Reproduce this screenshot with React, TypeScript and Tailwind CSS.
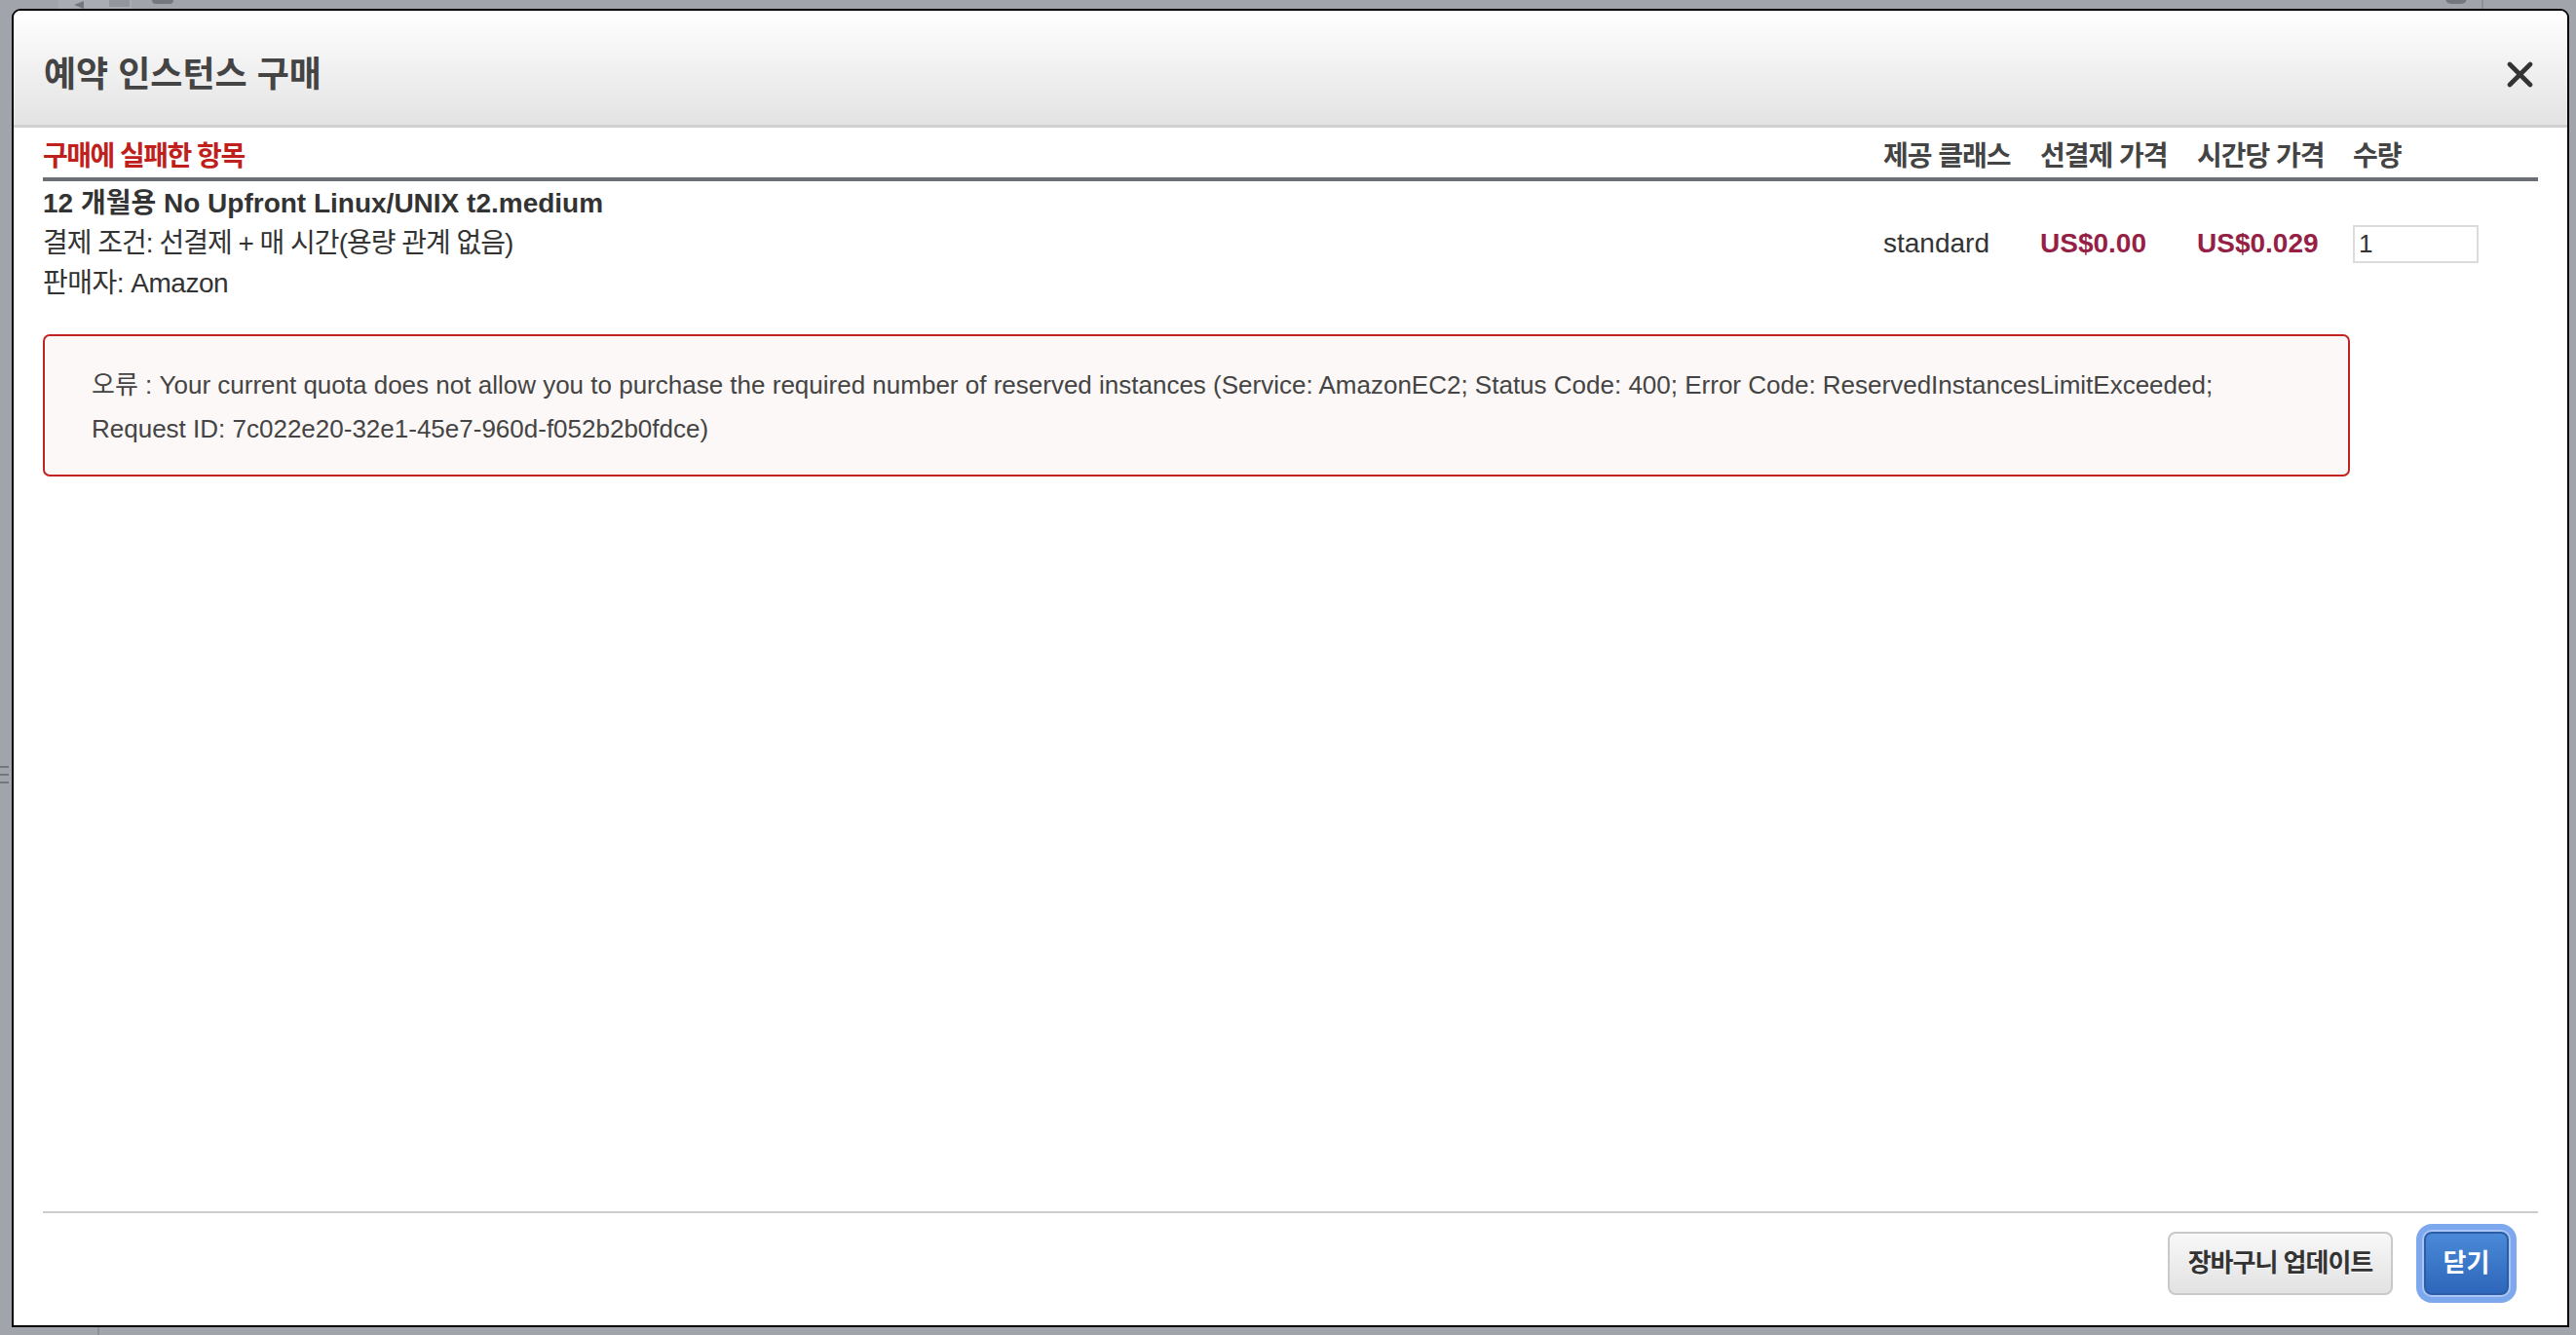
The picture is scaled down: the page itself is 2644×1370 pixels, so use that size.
export default function App() {
  const cols = "grid grid-cols-[1889px_161px_161px_160px_189px]";
  return (
    <div className="relative w-[2644px] h-[1370px] overflow-hidden bg-[#a1a4ab] font-['Liberation_Sans','Noto_Sans_CJK_KR',sans-serif]">
      {/* background page fragments peeking around the dialog */}
      <div className="absolute left-[60px] top-0 w-[75px] h-[10px] bg-[#a9acb3]" />
      <div className="absolute left-[76px] top-[1px] w-0 h-0 border-y-[4px] border-y-transparent border-r-[10px] border-r-[#74777d]" />
      <div className="absolute left-[112px] top-0 w-[21px] h-[7px] bg-[#93969c]" />
      <div className="absolute left-[156px] top-0 w-[22px] h-[4px] rounded-b-full bg-[#74777d]" />
      <div className="absolute left-[2510px] top-[-8px] w-[22px] h-[12px] rounded-full bg-[#74777d]" />
      <div className="absolute left-[2547px] top-0 w-[2px] h-[9px] bg-[#8d9096]" />
      <div className="absolute left-0 top-[786px] w-[9px] h-[2px] bg-[#73767c]" />
      <div className="absolute left-0 top-[794px] w-[9px] h-[2px] bg-[#73767c]" />
      <div className="absolute left-0 top-[802px] w-[9px] h-[2px] bg-[#73767c]" />
      <div className="absolute left-[100px] top-[1362px] w-[2px] h-[8px] bg-[#8d9096]" />

      {/* dialog */}
      <div className="absolute left-[12px] top-[9px] w-[2625px] h-[1353px] border-2 border-black rounded-t-[9px] bg-white flex flex-col overflow-hidden">
        {/* header */}
        <div className="h-[120px] shrink-0 border-b-[3px] border-[#d0d0d0] bg-linear-to-b from-[#ffffff] to-[#e3e3e3] flex items-center justify-between pl-[31px] pr-[35px] pt-[14px]">
          <h1 className="text-[36px] font-bold text-[#444444] leading-none">예약 인스턴스 구매</h1>
          <svg width="27" height="27" viewBox="0 0 27 27" className="shrink-0">
            <path d="M3 3 L24 24 M24 3 L3 24" stroke="#333333" strokeWidth="4.6" strokeLinecap="round" />
          </svg>
        </div>

        {/* body */}
        <div className="flex-1 px-[30px]">
          <div className={`${cols} h-[55px] border-b-4 border-[#6c6f75] text-[28px] font-bold leading-[34px] text-[#444444]`}>
            <div className="flex items-end pb-[4px] text-[#c0201b] tracking-[-1.5px]">구매에 실패한 항목</div>
            <div className="flex items-end pb-[4px] tracking-[-1px]">제공 클래스</div>
            <div className="flex items-end pb-[4px] tracking-[-1px]">선결제 가격</div>
            <div className="flex items-end pb-[4px] tracking-[-1px]">시간당 가격</div>
            <div className="flex items-end pb-[4px] tracking-[-1px]">수량</div>
          </div>

          <div className={`${cols} items-center pt-[2px] text-[28px] text-[#333333]`}>
            <div className="leading-[41px]">
              <div className="font-bold">12 개월용 No Upfront Linux/UNIX t2.medium</div>
              <div className="tracking-[-1px]">결제 조건: 선결제 + 매 시간(용량 관계 없음)</div>
              <div className="tracking-[-0.5px]">판매자: Amazon</div>
            </div>
            <div>standard</div>
            <div className="font-bold text-[#951f45]">US$0.00</div>
            <div className="font-bold text-[#951f45]">US$0.029</div>
            <div>
              <input
                defaultValue="1"
                className="w-[129px] h-[39px] border-2 border-[#dcdcdc] pl-[4px] text-[26px] text-[#333333] outline-none bg-white"
              />
            </div>
          </div>

          <div className="mt-[32px] w-[2368px] border-2 border-[#c2231e] rounded-[7px] bg-[#fcf8f7] pl-[48px] pr-[48px] pt-[28px] pb-[24px] text-[26px] leading-[45px] text-[#444444]">
            오류 : Your current quota does not allow you to purchase the required number of reserved instances (Service: AmazonEC2; Status Code: 400; Error Code: ReservedInstancesLimitExceeded; Request ID: 7c022e20-32e1-45e7-960d-f052b2b0fdce)
          </div>
        </div>

        {/* footer */}
        <div className="shrink-0 mx-[30px] border-t-2 border-[#cccccc] pt-[19px] pb-[31px] pr-[30px] flex justify-end items-center gap-[32px]">
          <button className="w-[231px] h-[65px] rounded-[8px] border-2 border-[#c9c9c9] bg-linear-to-b from-[#f8f8f8] to-[#e2e2e2] text-[26px] font-bold text-[#333333] tracking-[-1px] [text-shadow:0_1px_0_#ffffff]">
            장바구니 업데이트
          </button>
          <button className="w-[87px] h-[65px] rounded-[8px] border-2 border-[#2a5da6] bg-linear-to-b from-[#4b8ad8] to-[#2d66ba] text-[26px] font-bold text-white shadow-[0_0_0_2px_#a9c6f5,0_0_0_8px_#7ea8ee]">
            닫기
          </button>
        </div>
      </div>
    </div>
  );
}
